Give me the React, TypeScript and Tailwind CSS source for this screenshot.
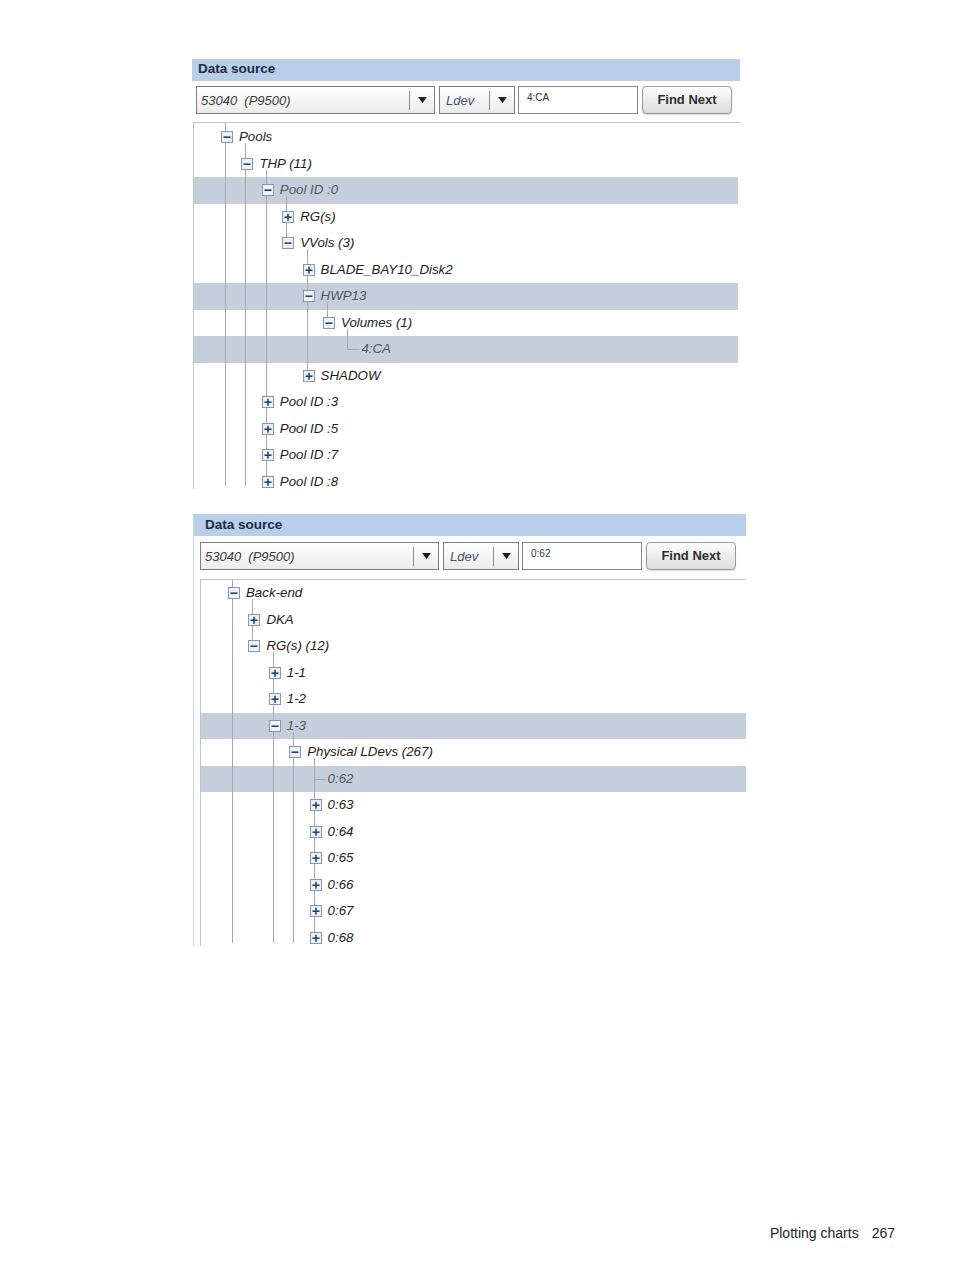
import React from 'react';

type Kind = 'minus' | 'plus' | 'leaf';
type TreeNode = { label: string; depth: number; kind: Kind; hl?: boolean };
// vertical connector at a depth, from a row to a row (-1 = top edge, 99 = bottom edge)
type Seg = { depth: number; from: number; to: number; ticks?: number[] };

const ROW = 26.5;
const TREE_H = 367;

const INDENT = [
  'pl-[27px]',
  'pl-[47.4px]',
  'pl-[67.8px]',
  'pl-[88.2px]',
  'pl-[108.6px]',
  'pl-[129px]',
  'pl-[149.4px]',
];

const font = "font-['Liberation_Sans',Arial,sans-serif]";

const Toggle: React.FC<{ kind: Kind }> = ({ kind }) => {
  if (kind === 'leaf') return <span className="w-[12px] shrink-0" />;
  return (
    <svg width="12" height="12" viewBox="0 0 12 12" className="relative z-10 shrink-0">
      <rect x="0.5" y="0.5" width="11" height="11" fill="#eef1f6" stroke="#8797ae" />
      <path d="M2.5 6.2h7" stroke="#1f4773" strokeWidth="1.6" />
      {kind === 'plus' && <path d="M6 2.7v7" stroke="#1f4773" strokeWidth="1.6" />}
    </svg>
  );
};

const Tree: React.FC<{
  nodes: TreeNode[];
  segs: Seg[];
  padTop: number;
  hlClass: string;
  className: string;
}> = ({ nodes, segs, padTop, hlClass, className }) => {
  const cy = (i: number) => padTop + ROW * i + ROW / 2;
  const lx = (d: number) => Math.floor(31.5 + 20.4 * d) + 0.5;
  const yFrom = (r: number) => (r < 0 ? 0 : cy(r) + 6);
  const yTo = (r: number) => (r >= 99 ? TREE_H - 4 : cy(r));

  return (
    <div className={`relative h-[367px] overflow-hidden border-l border-t border-[#c4c4c4] ${className}`}>
      <div className={padTop ? 'pt-px' : ''}>
        {nodes.map((n, i) => (
          <div
            key={i}
            className={`flex h-[26.5px] items-center ${INDENT[n.depth]} ${n.hl ? hlClass : ''}`}
          >
            <Toggle kind={n.kind} />
            <span
              className={`relative z-10 ml-[6px] pb-px whitespace-pre text-[13.3px] italic leading-none ${
                n.hl ? 'text-[#4e5661]' : 'text-[#1d1d1d]'
              }`}
            >
              {n.label}
            </span>
          </div>
        ))}
      </div>
      <svg className="pointer-events-none absolute inset-0 h-full w-full">
        {segs.map((s, i) => (
          <g key={i} stroke="#a8a8a8" strokeWidth="1">
            <line x1={lx(s.depth)} x2={lx(s.depth)} y1={yFrom(s.from)} y2={yTo(s.to)} />
            {(s.ticks || []).map((r) => (
              <line
                key={r}
                x1={lx(s.depth)}
                x2={lx(s.depth) + 12}
                y1={Math.round(cy(r)) + 0.5}
                y2={Math.round(cy(r)) + 0.5}
              />
            ))}
          </g>
        ))}
      </svg>
    </div>
  );
};

const Arrow = () => (
  <svg width="9" height="6" viewBox="0 0 9 6">
    <path d="M0 0h9L4.5 6z" fill="#1e1e1e" />
  </svg>
);

const Combo: React.FC<{ text: string; width: string; pad: string; tone: string }> = ({ text, width, pad, tone }) => (
  <div className={`flex h-[28px] items-center border border-[#7e7e7e] bg-gradient-to-b from-white to-[#ececec] ${width}`}>
    <span className={`flex-1 whitespace-pre text-[13px] italic leading-none ${pad} ${tone}`}>{text}</span>
    <span className="h-[19px] w-px bg-[#8c8c8c]" />
    <span className="flex w-[24px] justify-center">
      <Arrow />
    </span>
  </div>
);

const Controls: React.FC<{ query: string; className: string }> = ({ query, className }) => (
  <div className={`flex h-[28px] ${className}`}>
    <Combo text="53040  (P9500)" width="w-[239px]" pad="pl-[4px]" tone="text-[#3c3c3c]" />
    <div className="ml-[4px]">
      <Combo text="Ldev" width="w-[76px]" pad="pl-[6px]" tone="text-[#4a5468]" />
    </div>
    <div className="ml-[3px] h-[28px] w-[120px] border border-[#7c8896] bg-white pl-[8px] pt-[6px] text-[10px] leading-none text-[#333]">
      {query}
    </div>
    <button className="ml-[4px] flex h-[28px] w-[90px] items-center justify-center rounded-[4px] border border-[#9a9a9a] bg-gradient-to-b from-[#fefefe] to-[#dcdcdc] text-[13px] font-bold text-[#2e2e2e] shadow-[0_1px_1px_rgba(0,0,0,0.15)]">
      Find Next
    </button>
  </div>
);

const poolsTree: TreeNode[] = [
  { label: 'Pools', depth: 0, kind: 'minus' },
  { label: 'THP (11)', depth: 1, kind: 'minus' },
  { label: 'Pool ID :0', depth: 2, kind: 'minus', hl: true },
  { label: 'RG(s)', depth: 3, kind: 'plus' },
  { label: 'VVols (3)', depth: 3, kind: 'minus' },
  { label: 'BLADE_BAY10_Disk2', depth: 4, kind: 'plus' },
  { label: 'HWP13', depth: 4, kind: 'minus', hl: true },
  { label: 'Volumes (1)', depth: 5, kind: 'minus' },
  { label: '4:CA', depth: 6, kind: 'leaf', hl: true },
  { label: 'SHADOW', depth: 4, kind: 'plus' },
  { label: 'Pool ID :3', depth: 2, kind: 'plus' },
  { label: 'Pool ID :5', depth: 2, kind: 'plus' },
  { label: 'Pool ID :7', depth: 2, kind: 'plus' },
  { label: 'Pool ID :8', depth: 2, kind: 'plus' },
];

const poolsSegs: Seg[] = [
  { depth: 0, from: -1, to: 99 },
  { depth: 1, from: 0, to: 99 },
  { depth: 2, from: 1, to: 13 },
  { depth: 3, from: 2, to: 4 },
  { depth: 4, from: 4, to: 9 },
  { depth: 5, from: 6, to: 7 },
  { depth: 6, from: 7, to: 8, ticks: [8] },
];

const backendTree: TreeNode[] = [
  { label: 'Back-end', depth: 0, kind: 'minus' },
  { label: 'DKA', depth: 1, kind: 'plus' },
  { label: 'RG(s) (12)', depth: 1, kind: 'minus' },
  { label: '1-1', depth: 2, kind: 'plus' },
  { label: '1-2', depth: 2, kind: 'plus' },
  { label: '1-3', depth: 2, kind: 'minus', hl: true },
  { label: 'Physical LDevs (267)', depth: 3, kind: 'minus' },
  { label: '0:62', depth: 4, kind: 'leaf', hl: true },
  { label: '0:63', depth: 4, kind: 'plus' },
  { label: '0:64', depth: 4, kind: 'plus' },
  { label: '0:65', depth: 4, kind: 'plus' },
  { label: '0:66', depth: 4, kind: 'plus' },
  { label: '0:67', depth: 4, kind: 'plus' },
  { label: '0:68', depth: 4, kind: 'plus' },
];

const backendSegs: Seg[] = [
  { depth: 0, from: -1, to: 99 },
  { depth: 1, from: 0, to: 2 },
  { depth: 2, from: 2, to: 99 },
  { depth: 3, from: 5, to: 99 },
  { depth: 4, from: 6, to: 99, ticks: [7] },
];

const Header: React.FC<{ pad: string }> = ({ pad }) => (
  <div className={`flex h-[22px] items-center bg-[#b9cfe9] text-[13.5px] font-bold leading-none text-[#1b2c40] ${pad}`}>
    Data source
  </div>
);

export default function App() {
  return (
    <div className={`min-h-[1271px] w-[954px] bg-white ${font}`}>
      {/* first search panel */}
      <div className="ml-[192px] w-[548px] pt-[59px]">
        <Header pad="pl-[6px] pb-[3px]" />
        <Controls query="4:CA" className="mt-[5px] pl-[4px]" />
        <Tree
          nodes={poolsTree}
          segs={poolsSegs}
          padTop={1}
          hlClass="mr-[2px] bg-[#c5cfdc]"
          className="ml-[1px] mt-[8px] w-[547px]"
        />
      </div>

      {/* second search panel */}
      <div className="ml-[193px] mt-[25px] w-[553px] border-l border-[#c6d9ee]">
        <Header pad="pl-[11px]" />
        <Controls query="0:62" className="mt-[6px] pl-[6px]" />
        <Tree
          nodes={backendTree}
          segs={backendSegs}
          padTop={0}
          hlClass="bg-[#c5cfdc]"
          className="ml-[6px] mt-[9px] w-[546px]"
        />
      </div>

      {/* page footer */}
      <div className="mt-[279px] flex h-[16px] items-center justify-end pr-[59px] text-[14px] leading-[16px] text-[#222]">
        <span>Plotting charts</span>
        <span className="ml-[13px]">267</span>
      </div>
    </div>
  );
}
